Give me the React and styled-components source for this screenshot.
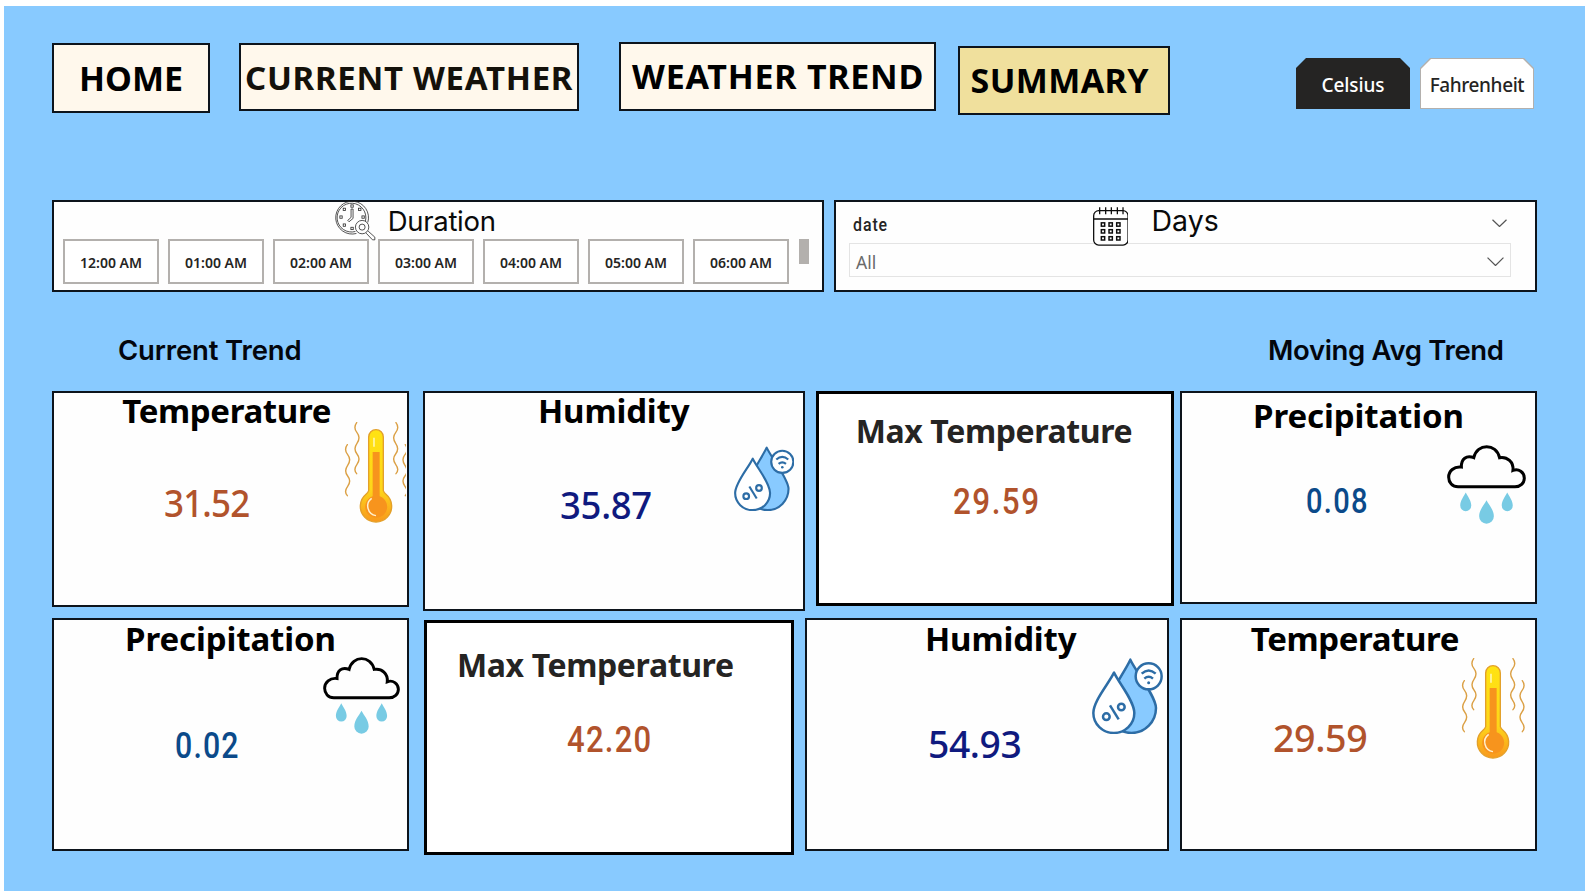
import React from "react";
import styled, { createGlobalStyle } from "styled-components";

const GlobalStyle = createGlobalStyle`
  body {
    margin: 0;
    background: #fff;
    font-family: "Noto Sans", "Open Sans", sans-serif;
  }
  button {
    font: inherit;
    color: inherit;
    text-align: left;
  }
`;

const LINE = "#0d141c";

const Board = styled.main`
  box-sizing: border-box;
  width: 1581px;
  height: 885px;
  margin: 6px 0 1px 4px;
  padding: 36px 0 0 48px;
  background: #88caff;
  overflow: hidden;
`;

const TopBar = styled.header`
  display: flex;
  align-items: flex-start;
  height: 158px;
`;

const NavButton = styled.button`
  box-sizing: border-box;
  flex: none;
  width: ${(p) => p.$width}px;
  height: ${(p) => p.$height}px;
  margin: ${(p) => p.$drop}px 0 0 ${(p) => p.$gap}px;
  padding: ${(p) => p.$pad};
  display: flex;
  align-items: flex-start;
  border: 2px solid ${LINE};
  background: ${(p) => (p.$active ? "#f0e09d" : "#fff8ec")};
  color: ${(p) => p.$ink || "#000"};
  font-size: ${(p) => p.$size || 34}px;
  font-weight: 700;
  line-height: 40px;
  letter-spacing: ${(p) => p.$tracking}px;
  white-space: nowrap;
`;

const UnitSwitch = styled.div`
  display: flex;
  gap: 10px;
  margin: 16px 0 0 126px;
`;

const cut = "polygon(10px 0, calc(100% - 10px) 0, 100% 10px, 100% 100%, 0 100%, 0 10px)";

const UnitButton = styled.button`
  box-sizing: border-box;
  width: 114px;
  height: 51px;
  padding: 1px;
  border: 0;
  clip-path: ${cut};
  background: ${(p) => (p.$selected ? "#252423" : "#b3b0ad")};
  color: ${(p) => (p.$selected ? "#fff" : "#252423")};
`;

const UnitFace = styled.span`
  display: flex;
  align-items: center;
  justify-content: center;
  height: 49px;
  padding-top: 3px;
  box-sizing: border-box;
  clip-path: ${cut};
  background: ${(p) => (p.$selected ? "#252423" : "#fff")};
  font-size: 19px;
  font-weight: 500;
  letter-spacing: ${(p) => (p.$selected ? -0.1 : -0.4)}px;
`;

const Filters = styled.section`
  display: flex;
  gap: 10px;
`;

const Panel = styled.div`
  box-sizing: border-box;
  width: ${(p) => p.$width}px;
  height: 92px;
  border: 2px solid ${LINE};
  background: #fefefe;
`;

const PanelHead = styled.div`
  display: flex;
  align-items: flex-start;
  height: ${(p) => p.$height}px;
`;

const PanelTitle = styled.h2`
  margin: 2.4px 0 0 ${(p) => p.$gap}px;
  color: #0a0a0a;
  font-family: Inter, sans-serif;
  font-size: ${(p) => p.$size}px;
  font-weight: 400;
  line-height: 34px;
  letter-spacing: ${(p) => p.$tracking}px;
  white-space: nowrap;
`;

const HeadIcon = styled.svg`
  flex: none;
  position: relative;
  z-index: 1;
  width: ${(p) => p.$w}px;
  height: ${(p) => p.$h}px;
  margin: ${(p) => p.$top}px 0 0 ${(p) => p.$gap}px;
`;

const Chips = styled.div`
  display: flex;
  gap: 9px;
  padding-left: 9px;
`;

const Chip = styled.button`
  box-sizing: border-box;
  flex: none;
  width: 96px;
  height: 45px;
  padding: 3px 0 0;
  display: flex;
  align-items: center;
  justify-content: center;
  border: 2px solid #b3b0ad;
  background: #fff;
  color: #252423;
  font-size: 14px;
  font-weight: 600;
  line-height: 20px;
`;

const ScrollThumb = styled.div`
  width: 10px;
  height: 25px;
  margin-left: 1px;
  background: #b3b0ad;
`;

const FieldName = styled.span`
  margin: 13px 0 0 17px;
  width: 39px;
  color: #252423;
  font: 500 17.5px/20px Roboto, sans-serif;
  letter-spacing: 1px;
  transform: scaleX(0.91);
  transform-origin: left;
`;

const Dropdown = styled.div`
  box-sizing: border-box;
  width: 662px;
  height: 34px;
  margin-left: 13px;
  padding: 3px 6px 0 6px;
  display: flex;
  align-items: center;
  justify-content: space-between;
  border: 1px solid #e4e4e4;
  color: #6a6a6a;
  font-size: 17.5px;
`;

const SectionLabels = styled.div`
  display: flex;
  align-items: flex-start;
  height: 57px;
  padding-top: 41px;
`;

const SectionLabel = styled.h3`
  width: 240px;
  margin: 0 0 0 ${(p) => p.$gap}px;
  color: #03060d;
  font-family: Inter, sans-serif;
  font-size: 27.5px;
  font-weight: 600;
  line-height: 34px;
  letter-spacing: ${(p) => p.$tracking}px;
  white-space: nowrap;
`;

const CardRow = styled.section`
  display: flex;
  align-items: flex-start;
  height: 228px;
`;

const Card = styled.article`
  box-sizing: border-box;
  flex: none;
  display: flex;
  align-items: flex-start;
  width: ${(p) => p.$width}px;
  height: ${(p) => p.$height}px;
  margin: ${(p) => p.$drop}px 0 0 ${(p) => p.$gap}px;
  border: ${(p) => (p.$heavy ? "3px solid #000" : `2px solid ${LINE}`)};
  background: ${(p) => (p.$heavy ? "#fff" : "#fefefe")};
`;

const CardBody = styled.div`
  flex: 1 1 0;
  min-width: 0;
  white-space: nowrap;
`;

const CardTitle = styled.h4`
  margin: 0 0 0 ${(p) => p.$left}px;
  padding-top: ${(p) => p.$top}px;
  color: ${(p) => (p.$heavy ? "#252423" : "#000")};
  font-size: ${(p) => (p.$heavy ? 32 : 33)}px;
  font-weight: 700;
  line-height: 32px;
  letter-spacing: ${(p) => p.$tracking}px;
`;

const CardValue = styled.div`
  margin: ${(p) => p.$top}px 0 0 ${(p) => p.$left}px;
  color: ${(p) => p.$color};
  font-family: ${(p) => (p.$narrow ? "Roboto" : '"Noto Sans"')}, sans-serif;
  font-size: ${(p) => p.$size}px;
  font-weight: 500;
  line-height: 40px;
  letter-spacing: ${(p) => p.$tracking}px;
  transform: scaleX(${(p) => p.$stretch || 1});
  transform-origin: left;
`;

const CardIcon = styled.svg`
  flex: none;
  width: ${(p) => p.$w}px;
  height: ${(p) => p.$h}px;
  margin: ${(p) => p.$top}px ${(p) => p.$right}px 0 0;
`;

function ClockSearchIcon() {
  const ticks = [[51, 15], [74, 25], [84, 48], [28, 25], [18, 48], [28, 72], [51, 82]];
  return (
    <HeadIcon $w={40.5} $h={39.5} $top={-1} $gap={281.4} viewBox="0 0 121 118" fill="none" stroke="#2a2a2a" strokeWidth="2.4">
      <path d="M98 64 A49 49 0 1 0 64 97" />
      <path d="M91 60 A43 43 0 1 0 61 91" />
      {ticks.map(([x, y]) => (
        <rect key={`${x}-${y}`} x={x - 3.5} y={y - 3.5} width="7" height="7" />
      ))}
      <path d="M48 24 h6 v28 l-12 10 l-4 -4 l10 -9 z" />
      <circle cx="81" cy="78" r="20" />
      <circle cx="81" cy="78" r="9" />
      <path d="M93 96 l19 20 h7 v-8 l-20 -18" />
    </HeadIcon>
  );
}

function CalendarIcon() {
  return (
    <HeadIcon $w={35.7} $h={38.7} $top={5} $gap={200.5} viewBox="0 0 107 116" fill="none" stroke="#0c0c0c" strokeWidth="3.8">
      <rect x="2" y="11" width="103" height="103" rx="15" fill="#fefefe" />
      <path d="M2 36 H105" />
      <path d="M20 1 V22 M38 1 V22 M55 1 V22 M73 1 V22 M90 1 V22" />
      {[47.5, 68, 89].map((y) =>
        [25, 48, 71].map((x) => <rect key={`${x}-${y}`} x={x} y={y} width="10" height="10" strokeWidth="4.4" />)
      )}
    </HeadIcon>
  );
}

const Chevron = styled.svg`
  flex: none;
  width: ${(p) => p.$w}px;
  height: ${(p) => p.$w * 0.55}px;
  margin: ${(p) => p.$margin || 0};
  fill: none;
  stroke: #555;
  stroke-width: 1.2;
`;

function ThermometerIcon(props) {
  const waves = (
    <>
      <path d="M38 2 Q27 17 39 32 T39 64 T39 96 T39 127 T38 155" />
      <path d="M10 68 Q-1 83 11 98 T11 130 T11 162 T11 193 T10 221" />
    </>
  );
  return (
    <CardIcon {...props} viewBox="0 0 190 304" preserveAspectRatio="xMinYMin slice" fill="none">
      <defs>
        <linearGradient id="heat" x1="0" y1="0" x2="0" y2="1">
          <stop offset="0" stopColor="#ffe312" />
          <stop offset="0.65" stopColor="#fed61a" />
          <stop offset="1" stopColor="#f8981d" />
        </linearGradient>
      </defs>
      <g stroke="#dba045" strokeWidth="4.2" strokeLinecap="round">
        {waves}
        <g transform="translate(194 0) scale(-1 1)">{waves}</g>
      </g>
      <path
        d="M74 45 A22 22 0 0 1 118 45 V206 Q120 212 126 217 A47 47 0 1 1 66 217 Q72 212 74 206 Z"
        fill="url(#heat)"
        stroke="#e3a02a"
        strokeWidth="4"
      />
      <path d="M86 90 H107 V223 A33 33 0 1 1 86 223 Z" fill="#f7941d" />
      <path d="M90 47 V74" stroke="#fffbd0" strokeWidth="4" />
      <path d="M83 229 A29 29 0 0 0 96 281" stroke="#fff1cf" strokeWidth="4.5" />
    </CardIcon>
  );
}

function HumidityIcon(props) {
  return (
    <CardIcon {...props} viewBox="0 0 213 229" fill="none" stroke="#2d6da6" strokeWidth="7.5" strokeLinejoin="round">
      <path d="M115 5 C99 40 45 115 45 150 A73.5 75 0 0 0 192 150 C192 115 131 40 115 5 Z" fill="#88caff" />
      <path d="M66 44 C50 77 4 129 4 165 A61.5 60 0 0 0 127 165 C127 129 82 77 66 44 Z" fill="#fff" />
      <circle cx="170" cy="55" r="39" fill="#fff" />
      <path d="M149 47 Q170 28 191 47 M157 62 Q170 51 183 62" />
      <circle cx="170" cy="74" r="4.5" fill="#2d6da6" stroke="none" />
      <circle cx="43" cy="176" r="10" />
      <circle cx="88" cy="147" r="10" />
      <path d="M54 142 L80 184" />
    </CardIcon>
  );
}

function RainIcon(props) {
  return (
    <CardIcon {...props} viewBox="0 0 236 236" fill="none">
      <path
        d="M33 125 C16 125 5 112 5 96 C5 78 21 63 43 66 C42 42 58 29 80 38 C90 -6 147 -6 157 38 C180 34 200 51 197 76 C214 69 231 82 231 99 C231 114 219 125 203 125 Z"
        stroke="#000"
        strokeWidth="9"
      />
      <g fill="#78cbe4">
        <path d="M56 142 C50 154 39.5 166 39.5 181 A16.5 17 0 0 0 72.5 181 C72.5 166 62 154 56 142 Z" />
        <path d="M180 142 C174 154 163.5 166 163.5 181 A16.5 17 0 0 0 196.5 181 C196.5 166 186 154 180 142 Z" />
        <path d="M118 165 C110 180 96 194 96 213 A22 22 0 0 0 140 213 C140 194 126 180 118 165 Z" />
      </g>
    </CardIcon>
  );
}

const hours = ["12:00 AM", "01:00 AM", "02:00 AM", "03:00 AM", "04:00 AM", "05:00 AM", "06:00 AM"];

const RUST = "#b1532c";
const NAVY = "#0f1a7f";
const STEEL = "#0b4a8a";

const rows = [
  [
    {
      card: { $width: 357, $height: 216, $drop: 1, $gap: 0 },
      title: ["Temperature", { $top: 2.4, $left: 68.3, $tracking: -0.35 }],
      value: ["31.52", { $top: 55, $left: 109.5, $size: 38, $color: RUST, $tracking: -0.9, $stretch: 0.92 }],
      icon: [ThermometerIcon, { $w: 62.5, $h: 101.3, $top: 28.5, $right: 0.7 }],
    },
    {
      card: { $width: 382, $height: 220, $drop: 1, $gap: 14 },
      title: ["Humidity", { $top: 2.4, $left: 113, $tracking: -0.15 }],
      value: ["35.87", { $top: 56.5, $left: 134.5, $size: 38, $color: NAVY, $tracking: -0.3, $stretch: 0.96 }],
      icon: [HumidityIcon, { $w: 60.5, $h: 65.5, $top: 52.5, $right: 9 }],
    },
    {
      card: { $width: 358, $height: 215, $drop: 1, $gap: 11, $heavy: true },
      title: ["Max Temperature", { $top: 20.6, $left: 36.7, $tracking: -0.38, $heavy: true }],
      value: ["29.59", { $top: 35.2, $left: 134, $size: 37, $color: RUST, $narrow: true, $tracking: 1.7, $stretch: 0.85 }],
    },
    {
      card: { $width: 357, $height: 213, $drop: 1, $gap: 6 },
      title: ["Precipitation", { $top: 7, $left: 71, $tracking: -0.1 }],
      value: ["0.08", { $top: 50.2, $left: 124, $size: 35, $color: STEEL, $narrow: true, $tracking: 1.6, $stretch: 0.83 }],
      icon: [RainIcon, { $w: 79, $h: 79, $top: 52, $right: 9.5 }],
    },
  ],
  [
    {
      card: { $width: 357, $height: 233, $drop: 0, $gap: 0 },
      title: ["Precipitation", { $top: 3.4, $left: 71, $tracking: -0.1 }],
      value: ["0.02", { $top: 70.4, $left: 121, $size: 36.5, $color: STEEL, $narrow: true, $tracking: 1.4, $stretch: 0.83 }],
      icon: [RainIcon, { $w: 77, $h: 77, $top: 37, $right: 7 }],
    },
    {
      card: { $width: 370, $height: 235, $drop: 2, $gap: 15, $heavy: true },
      title: ["Max Temperature", { $top: 26.4, $left: 30, $tracking: -0.38, $heavy: true }],
      value: ["42.20", { $top: 38.4, $left: 139.5, $size: 36.5, $color: RUST, $narrow: true, $tracking: 1.5, $stretch: 0.85 }],
    },
    {
      card: { $width: 364, $height: 233, $drop: 0, $gap: 11 },
      title: ["Humidity", { $top: 3.4, $left: 118, $tracking: -0.15 }],
      value: ["54.93", { $top: 67.4, $left: 121, $size: 38, $color: NAVY, $tracking: -0.4, $stretch: 0.98 }],
      icon: [HumidityIcon, { $w: 71, $h: 76.3, $top: 37.5, $right: 4.3 }],
    },
    {
      card: { $width: 357, $height: 233, $drop: 0, $gap: 11 },
      title: ["Temperature", { $top: 3.4, $left: 68.8, $tracking: -0.4 }],
      value: ["29.59", { $top: 61.4, $left: 91.3, $size: 38, $color: RUST, $tracking: -0.4, $stretch: 0.99 }],
      icon: [ThermometerIcon, { $w: 63.3, $h: 101.3, $top: 38, $right: 10.5 }],
    },
  ],
];

function MetricCard({ card, title, value, icon }) {
  const Icon = icon && icon[0];
  return (
    <Card {...card}>
      <CardBody>
        <CardTitle {...title[1]}>{title[0]}</CardTitle>
        <CardValue {...value[1]}>{value[0]}</CardValue>
      </CardBody>
      {Icon && <Icon {...icon[1]} />}
    </Card>
  );
}

export default function App() {
  return (
    <>
      <GlobalStyle />
      <Board>
        <TopBar>
          <NavButton $width={158} $height={70} $drop={1} $gap={0} $pad="13px 0 0 25px" $tracking={0}>HOME</NavButton>
          <NavButton $width={340} $height={68} $drop={1} $gap={29} $pad="13px 0 0 4px" $size={33} $tracking={0.7} $ink="#14110a">
            CURRENT WEATHER
          </NavButton>
          <NavButton $width={317} $height={69} $drop={0} $gap={40} $pad="12px 0 0 11px" $tracking={0.75}>WEATHER TREND</NavButton>
          <NavButton $active $width={212} $height={69} $drop={4} $gap={22} $pad="12px 0 0 10.5px" $tracking={0.4}>SUMMARY</NavButton>
          <UnitSwitch>
            <UnitButton $selected>
              <UnitFace $selected>Celsius</UnitFace>
            </UnitButton>
            <UnitButton>
              <UnitFace>Fahrenheit</UnitFace>
            </UnitButton>
          </UnitSwitch>
        </TopBar>

        <Filters>
          <Panel $width={772}>
            <PanelHead $height={37}>
              <ClockSearchIcon />
              <PanelTitle $gap={11.8} $size={27.5} $tracking={-0.3}>Duration</PanelTitle>
            </PanelHead>
            <Chips>
              {hours.map((h) => (
                <Chip key={h}>{h}</Chip>
              ))}
              <ScrollThumb />
            </Chips>
          </Panel>
          <Panel $width={703}>
            <PanelHead $height={41}>
              <FieldName>date</FieldName>
              <CalendarIcon />
              <PanelTitle $gap={23.3} $size={28.5} $tracking={0}>Days</PanelTitle>
              <Chevron $w={15} $margin="17px 28px 0 auto" viewBox="0 0 15 8.2">
                <path d="M0.5 0.7 L7.5 7.5 L14.5 0.7" />
              </Chevron>
            </PanelHead>
            <Dropdown>
              All
              <Chevron $w={17} $margin="0" viewBox="0 0 17 9.4">
                <path d="M0.5 0.7 L8.5 8.6 L16.5 0.7" />
              </Chevron>
            </Dropdown>
          </Panel>
        </Filters>

        <SectionLabels>
          <SectionLabel $gap={66} $tracking={-0.15}>Current Trend</SectionLabel>
          <SectionLabel $gap={910} $tracking={-0.33}>Moving Avg Trend</SectionLabel>
        </SectionLabels>

        {rows.map((row, i) => (
          <CardRow key={i}>
            {row.map((item, j) => (
              <MetricCard key={j} {...item} />
            ))}
          </CardRow>
        ))}
      </Board>
    </>
  );
}
